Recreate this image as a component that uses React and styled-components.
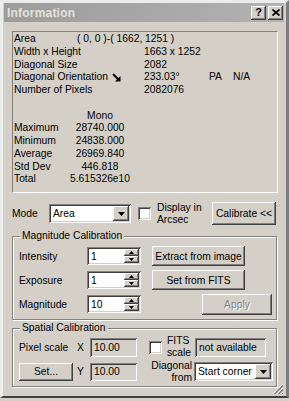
import React from 'react';
import styled, { createGlobalStyle, css } from 'styled-components';

const GlobalStyle = createGlobalStyle`
  html, body {
    margin: 0;
    padding: 0;
    background: #d4d0c8;
  }
  body {
    font-family: "Liberation Sans", Arial, sans-serif;
    font-size: 10.3px;
    color: #000;
  }
`;

const sunken = css`
  box-shadow: inset 1px 1px 0 #808080, inset -1px -1px 0 #fff,
    inset 2px 2px 0 #404040, inset -2px -2px 0 #d4d0c8;
`;

const raised = css`
  box-shadow: inset -1px -1px 0 #404040, inset 1px 1px 0 #fff,
    inset -2px -2px 0 #808080;
`;

const Window = styled.div`
  position: relative;
  box-sizing: border-box;
  width: 289px;
  height: 398px;
  background: #d4d0c8;
  border-style: solid;
  border-width: 3px 3px 2px 3px;
  border-color: #ececec #7c7c7c #404040 #ececec;
  display: flex;
  flex-direction: column;
`;

const TitleBar = styled.div`
  height: 19px;
  margin: 0 2px 0 1px;
  padding: 0 1px 0 3px;
  background: linear-gradient(to right, #9c9c9c, #b2b2b2);
  display: flex;
  align-items: center;
`;

const TitleText = styled.span`
  flex: 1;
  color: #e4e2dc;
  font-weight: bold;
  font-size: 12px;
  letter-spacing: 0.2px;
`;

const TitleButton = styled.div`
  box-sizing: border-box;
  width: 15px;
  height: 14px;
  margin-left: ${p => p.$gap || 0}px;
  background: #d4d0c8;
  ${raised};
  display: flex;
  align-items: center;
  justify-content: center;
  font-weight: bold;
  font-size: 11px;
  line-height: 1;
`;

const Content = styled.div`
  padding: 9px 8px 0 9px;
  display: flex;
  flex-direction: column;
`;

const InfoBox = styled.div`
  box-sizing: border-box;
  height: 162px;
  border: 1px solid;
  border-color: #808080 #fff #fff #808080;
  padding: 1px 0 0 1px;
  line-height: 12.75px;
`;

const Row = styled.div`
  display: flex;
  align-items: center;
  height: 12.75px;
  white-space: nowrap;
`;

const Label = styled.span`
  width: ${p => p.$w || 130}px;
  flex: none;
  display: flex;
  align-items: center;
`;

const Cell = styled.span`
  width: ${p => (p.$w ? `${p.$w}px` : 'auto')};
  flex: none;
  text-align: ${p => p.$align || 'left'};
`;

const ModeRow = styled.div`
  margin-top: 9px;
  height: 23px;
  display: flex;
  align-items: center;
`;

const Field = styled.div`
  box-sizing: border-box;
  width: ${p => p.$w}px;
  height: ${p => p.$h || 18}px;
  margin-left: ${p => p.$ml || 0}px;
  background: ${p => (p.$readOnly ? '#d4d0c8' : '#fff')};
  ${sunken};
  padding: 2px;
  display: flex;
  align-items: stretch;
  flex: none;
`;

const FieldText = styled.span`
  flex: 1;
  padding-left: 2px;
  display: flex;
  align-items: center;
  white-space: nowrap;
  overflow: hidden;
`;

const DropButton = styled.div`
  width: 16px;
  background: #d4d0c8;
  ${raised};
  display: flex;
  align-items: center;
  justify-content: center;
`;

const SpinButtons = styled.div`
  width: 15px;
  display: flex;
  flex-direction: column;
`;

const SpinButton = styled.div`
  flex: 1;
  background: #d4d0c8;
  ${raised};
  display: flex;
  align-items: center;
  justify-content: center;
`;

const Check = styled.div`
  box-sizing: border-box;
  width: 13px;
  height: 13px;
  margin-left: ${p => p.$ml || 0}px;
  flex: none;
  background: #fff;
  ${sunken};
`;

const TwoLine = styled.div`
  width: ${p => p.$w}px;
  margin-left: ${p => p.$ml || 0}px;
  flex: none;
  line-height: 12px;
  text-align: ${p => p.$align || 'left'};
`;

const Button = styled.button`
  box-sizing: border-box;
  width: ${p => p.$w}px;
  height: ${p => p.$h || 20}px;
  margin-left: ${p => p.$ml || 0}px;
  padding: 0;
  border: 0;
  background: #d4d0c8;
  ${raised};
  font: inherit;
  color: ${p => (p.disabled ? '#808080' : '#000')};
  text-shadow: ${p => (p.disabled ? '1px 1px 0 #fff' : 'none')};
  flex: none;
  justify-self: ${p => p.$justify || 'start'};
`;

const Group = styled.div`
  margin: ${p => p.$mt}px 1px 0 0;
  border: 1px solid #808080;
  box-shadow: 1px 1px 0 #fff, inset 1px 1px 0 #fff;
  padding: 0 4px 3px 6px;
  display: flex;
  flex-direction: column;
`;

const Caption = styled.div`
  align-self: flex-start;
  margin: -7px 0 2px 1px;
  padding: 0 2px;
  background: #d4d0c8;
  line-height: 12px;
`;

const MagGrid = styled.div`
  display: grid;
  grid-template-columns: 57px 54px 1fr;
  grid-auto-rows: 24px;
  column-gap: 11px;
  align-items: center;
`;

const SpatialRow = styled.div`
  display: flex;
  align-items: center;
  height: ${p => p.$h}px;
  margin-top: ${p => p.$mt || 0}px;
`;

const Axis = styled.span`
  width: 13px;
  flex: none;
`;

const Grip = styled.svg`
  position: absolute;
  right: 2px;
  bottom: 1px;
`;

const DownArrow = () => (
  <svg width="7" height="4" viewBox="0 0 7 4">
    <polygon points="0,0 7,0 3.5,4" fill="#000" />
  </svg>
);

const SpinArrow = ({ up }) => (
  <svg width="5" height="3" viewBox="0 0 5 3">
    <polygon points={up ? '0,3 5,3 2.5,0' : '0,0 5,0 2.5,3'} fill="#000" />
  </svg>
);

const DiagArrow = () => (
  <svg width="9" height="9" viewBox="0 0 9 9" style={{ marginLeft: 4 }}>
    <line x1="1" y1="1" x2="6" y2="6" stroke="#000" strokeWidth="2" />
    <polygon points="8.5,3 8.5,8.5 3,8.5" fill="#000" />
  </svg>
);

const Spin = ({ value }) => (
  <Field $w={54}>
    <FieldText>{value}</FieldText>
    <SpinButtons>
      <SpinButton><SpinArrow up /></SpinButton>
      <SpinButton><SpinArrow /></SpinButton>
    </SpinButtons>
  </Field>
);

const Combo = ({ value, w, h, ml }) => (
  <Field $w={w} $h={h} $ml={ml}>
    <FieldText>{value}</FieldText>
    <DropButton><DownArrow /></DropButton>
  </Field>
);

const stats = [
  ['Maximum', '28740.000'],
  ['Minimum', '24838.000'],
  ['Average', '26969.840'],
  ['Std Dev', '446.818'],
  ['Total', '5.615326e10'],
];

export default function App() {
  return (
    <>
      <GlobalStyle />
      <Window>
        <TitleBar>
          <TitleText>Information</TitleText>
          <TitleButton>?</TitleButton>
          <TitleButton $gap={2}>
            <svg width="8" height="7" viewBox="0 0 8 7">
              <path d="M0.5 0.5 L7.5 6.5 M7.5 0.5 L0.5 6.5" stroke="#000" strokeWidth="1.6" />
            </svg>
          </TitleButton>
        </TitleBar>

        <Content>
          <InfoBox>
            <Row>
              <Label $w={63}>Area</Label>
              <Cell>( 0, 0 )-( 1662, 1251 )</Cell>
            </Row>
            <Row>
              <Label>Width x Height</Label>
              <Cell>1663 x 1252</Cell>
            </Row>
            <Row>
              <Label>Diagonal Size</Label>
              <Cell>2082</Cell>
            </Row>
            <Row>
              <Label>Diagonal Orientation<DiagArrow /></Label>
              <Cell $w={65}>233.03°</Cell>
              <Cell $w={24}>PA</Cell>
              <Cell>N/A</Cell>
            </Row>
            <Row>
              <Label>Number of Pixels</Label>
              <Cell>2082076</Cell>
            </Row>
            <Row />
            <Row>
              <Label $w={50} />
              <Cell $w={72} $align="center">Mono</Cell>
            </Row>
            {stats.map(([name, val]) => (
              <Row key={name}>
                <Label $w={50}>{name}</Label>
                <Cell $w={72} $align="center">{val}</Cell>
              </Row>
            ))}
          </InfoBox>

          <ModeRow>
            <Label $w={37}>Mode</Label>
            <Combo value="Area" w={82} h={19} />
            <Check $ml={7} />
            <TwoLine $w={50} $ml={6}>Display in<br />Arcsec</TwoLine>
            <Button $w={64} $h={23} $ml={5}>Calibrate &lt;&lt;</Button>
          </ModeRow>

          <Group $mt={11}>
            <Caption>Magnitude Calibration</Caption>
            <MagGrid>
              <span>Intensity</span>
              <Spin value="1" />
              <Button $w={93}>Extract from image</Button>
              <span>Exposure</span>
              <Spin value="1" />
              <Button $w={93}>Set from FITS</Button>
              <span>Magnitude</span>
              <Spin value="10" />
              <Button $w={70} $h={21} $justify="end" disabled>Apply</Button>
            </MagGrid>
          </Group>

          <Group $mt={8}>
            <Caption>Spatial Calibration</Caption>
            <SpatialRow $h={22}>
              <Label $w={58}>Pixel scale</Label>
              <Axis>X</Axis>
              <Field $w={47} $h={19} $readOnly>
                <FieldText>10.00</FieldText>
              </Field>
              <Check $ml={12} />
              <TwoLine $w={29} $ml={0}>
                <div style={{ paddingLeft: 5 }}>FITS</div>
                <div style={{ textAlign: 'right' }}>scale</div>
              </TwoLine>
              <Field $w={71} $h={19} $ml={4} $readOnly>
                <FieldText>not available</FieldText>
              </Field>
            </SpatialRow>
            <SpatialRow $h={23} $mt={2}>
              <Button $w={54} $h={18}>Set...</Button>
              <Axis style={{ marginLeft: 4 }}>Y</Axis>
              <Field $w={47} $h={18} $readOnly>
                <FieldText>10.00</FieldText>
              </Field>
              <TwoLine $w={44} $ml={11} $align="right">Diagonal<br />from</TwoLine>
              <Combo value="Start corner" w={79} h={19} ml={2} />
            </SpatialRow>
          </Group>
        </Content>

        <Grip width="12" height="12" viewBox="0 0 12 12">
          <path d="M11 1 L1 11 M11 5 L5 11 M11 9 L9 11" stroke="#fff" strokeWidth="1" />
          <path d="M11 2 L2 11 M11 3 L3 11 M11 6 L6 11 M11 7 L7 11 M11 10 L10 11" stroke="#808080" strokeWidth="1" />
        </Grip>
      </Window>
    </>
  );
}
